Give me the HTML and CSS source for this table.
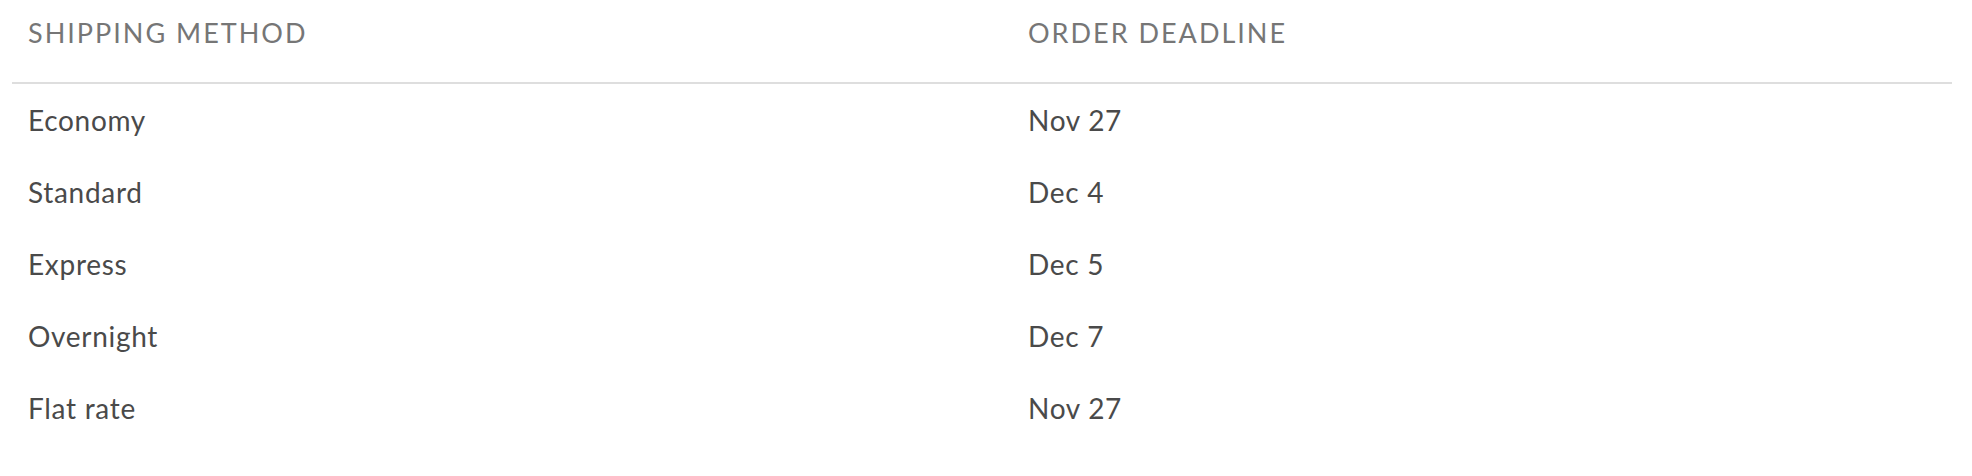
FILE: index.html
```html
<!DOCTYPE html>
<html lang="en">
<head>
<meta charset="utf-8">
<title>Shipping deadlines</title>
<link rel="stylesheet" href="styles.css">
</head>
<body>
<div class="table">
  <div class="row head">
    <div class="cell">SHIPPING METHOD</div>
    <div class="cell">ORDER DEADLINE</div>
  </div>
  <div class="row">
    <div class="cell">Economy</div>
    <div class="cell">Nov 27</div>
  </div>
  <div class="row">
    <div class="cell">Standard</div>
    <div class="cell">Dec 4</div>
  </div>
  <div class="row">
    <div class="cell">Express</div>
    <div class="cell">Dec 5</div>
  </div>
  <div class="row">
    <div class="cell">Overnight</div>
    <div class="cell">Dec 7</div>
  </div>
  <div class="row">
    <div class="cell">Flat rate</div>
    <div class="cell">Nov 27</div>
  </div>
</div>
</body>
</html>
```
FILE: styles.css
```css
html, body {
  margin: 0;
  padding: 0;
  background: #ffffff;
}
body {
  font-family: Lato, "Liberation Sans", sans-serif;
  color: #4a4a4a;
}
.table {
  width: 1940px;
  margin-left: 12px;
  display: flex;
  flex-direction: column;
}
.row {
  display: grid;
  grid-template-columns: 1000px 1fr;
  height: 72px;
  align-items: center;
  font-size: 28px;
  letter-spacing: 0.7px;
}
.head {
  height: 84px;
  align-items: start;
  padding-top: 16px;
  box-sizing: border-box;
  border-bottom: 2px solid #dedede;
  color: #767676;
  font-size: 27px;
  letter-spacing: 2px;
}
.cell {
  padding-left: 16px;
  white-space: nowrap;
}
```
